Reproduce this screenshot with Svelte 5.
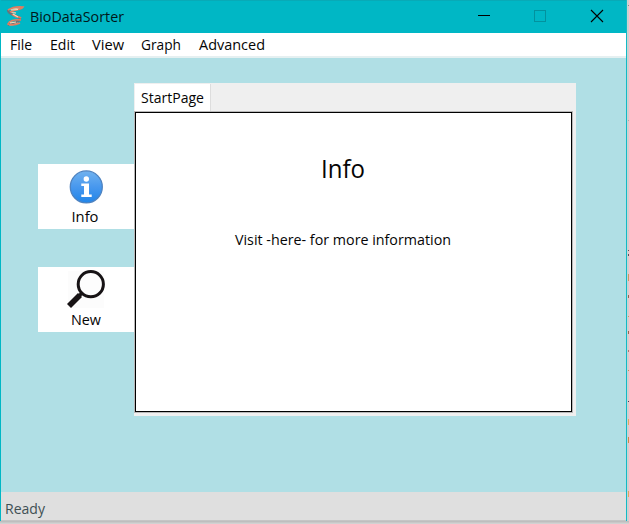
<script>
  const menus = [
    { label: 'File', width: 22, gap: 18 },
    { label: 'Edit', width: 25, gap: 17 },
    { label: 'View', width: 32, gap: 17 },
    { label: 'Graph', width: 40, gap: 18 },
    { label: 'Advanced', width: 66, gap: 0 }
  ];
  const specks = [
    { top: 5, color: '#8b8b8b', height: 1 },
    { top: 120, color: '#aaa', height: 1 },
    { top: 250, color: '#55515c', height: 1 },
    { top: 254, color: '#55515c', height: 2 },
    { top: 274, color: '#c69b62', height: 7 },
    { top: 295, color: '#8d6650', height: 3 },
    { top: 316, color: '#c09b68', height: 1 },
    { top: 331, color: '#94694f', height: 3 },
    { top: 350, color: '#a57c73', height: 2 },
    { top: 370, color: '#b8935c', height: 1 },
    { top: 401, color: '#453d58', height: 1 },
    { top: 419, color: '#d6ad61', height: 6 },
    { top: 437, color: '#c98c45', height: 6 },
    { top: 491, color: '#d6a961', height: 6 }
  ];
</script>

<div class="screen">
  <main class="window">
    <header>
      <svg class="logo" width="18" height="22" viewBox="0 0 18 22" fill="none">
        <path d="M4 4L14 3M4 7L10 8M8 11L15 13M3 17L12 18M3 20L10 19" stroke="#d3c7ae" stroke-width="1.7" />
        <path d="M2 5C2 11 14 10 14 14C14 17 7 17 2 20" stroke="#68747a" stroke-width="2.4" />
        <path d="M2 5Q8 1 17 2C15 5 9 4 4 7M6 9C8 12 12 11 15 13M15 15C8 14 3 16 2 19Q7 21 14 18" stroke="#e17c60" stroke-width="1.7" />
        <path d="M5 5L12 4.5M7 9L12 12M4 18L10 17" stroke="#f2dfbd" stroke-width="1.2" />
      </svg>
      <svg class="title" width="96" height="24"><text x="0" y="17" textLength="94" lengthAdjust="spacingAndGlyphs">BioDataSorter</text></svg>
      <svg class="controls" width="140" height="24" viewBox="0 0 140 24" fill="none" shape-rendering="crispEdges">
        <path d="M1 11.5H13" stroke="#000" />
        <rect x="57.5" y="6.5" width="11" height="11" stroke="#02929e" />
        <path d="M114 6L126 18M126 6L114 18" stroke="#000" stroke-width="1.1" shape-rendering="auto" />
      </svg>
    </header>
    <nav>
      {#each menus as item}
        <svg width={item.width} height="24" style:margin-right="{item.gap}px"><text x="0" y="17" textLength={item.width} lengthAdjust="spacingAndGlyphs">{item.label}</text></svg>
      {/each}
    </nav>
    <section class="client">
      <aside>
        <button>
          <svg width="96" height="65" viewBox="0 0 96 65">
            <defs><linearGradient id="blue" x2="0" y2="1"><stop stop-color="#70b2ef" /><stop offset=".5" stop-color="#4898ee" /><stop offset="1" stop-color="#2185e9" /></linearGradient></defs>
            <circle cx="48.3" cy="22.9" r="16" fill="url(#blue)" stroke="#4f83c0" stroke-width="1.3" />
            <circle cx="48.3" cy="15" r="2.7" fill="#fff" />
            <path d="M43.3 19.5H51V30.5H53.7V33H43.3V30.5H46V22H43.3Z" fill="#fff" />
            <text x="33.5" y="58" textLength="27" lengthAdjust="spacingAndGlyphs">Info</text>
          </svg>
        </button>
        <button>
          <svg width="96" height="65" viewBox="0 0 96 65">
            <rect x="30" y="4" width="36" height="37" fill="#fcfcfc" />
            <circle cx="52.8" cy="17.2" r="12.6" fill="#fdfdfd" stroke="#171315" stroke-width="3" />
            <path d="M44 26L40.5 29.5" stroke="#171315" stroke-width="3.4" />
            <path d="M42 28L31 39" stroke="#171315" stroke-width="5.6" />
            <text x="33" y="58" textLength="30" lengthAdjust="spacingAndGlyphs">New</text>
          </svg>
        </button>
      </aside>
      <section class="notebook">
        <div class="tab"><svg width="64" height="26"><text x="0" y="19" textLength="63" lengthAdjust="spacingAndGlyphs">StartPage</text></svg></div>
        <article>
          <svg class="heading" width="48" height="38"><text x="0" y="26" textLength="44" lengthAdjust="spacingAndGlyphs">Info</text></svg>
          <svg class="copy" width="220" height="24"><text x="0" y="17" textLength="216" lengthAdjust="spacingAndGlyphs">Visit -here- for more information</text></svg>
        </article>
      </section>
    </section>
    <footer><svg width="42" height="28"><text x="0" y="22" textLength="40" lengthAdjust="spacingAndGlyphs">Ready</text></svg></footer>
  </main>
  {#each specks as speck}
    <i style:top="{speck.top}px" style:height="{speck.height}px" style:background={speck.color}></i>
  {/each}
</div>

<style>
  :global(body) { margin: 0; overflow: hidden; }
  * { box-sizing: border-box; }
  svg { display: block; flex: none; overflow: visible; }
  text { font: 15px "Open Sans", "Noto Sans", sans-serif; fill: #050505; }
  .screen { width: 629px; height: 524px; position: relative; overflow: hidden; background: linear-gradient(to bottom, #d0d0d0 0 521px, #b9b9b9 521px, #d7d7d7 524px); }
  .window { width: 627px; height: 521px; border-left: 1px solid #00b7c5; border-right: 1px solid #12bac6; }
  header { height: 33px; background: #00b7c5; border-top: 1px solid #08aab7; display: flex; padding: 3px 0 0 5px; }
  .logo { margin-top: 1px; }
  .title { margin: 1px 0 0 6px; }
  .title text { fill: #001719; }
  .controls { margin-left: 351px; }
  nav { height: 25px; background: #fff; border-bottom: 2px solid #e5f0f1; display: flex; padding-left: 9px; }
  .client { height: 434px; display: flex; background: #b0dfe5; padding: 25px 0 0 37px; }
  aside { width: 96px; padding-top: 81px; }
  button { display: block; width: 96px; height: 65px; padding: 0; border: 0; background: #fff; margin-bottom: 38px; }
  .notebook { width: 442px; height: 333px; background: #efefef; padding-left: 1px; }
  .tab { width: 76px; height: 28px; margin-top: 1px; border-right: 1px solid #ddd; background: #fff; padding-left: 6px; }
  article { width: 437px; height: 300px; border: 1px solid #000; box-shadow: 0 0 0 1px #b8b8b8; background: #fff; padding: 39px 0 0 99px; }
  .heading { margin-left: 86px; }
  .heading text { font-size: 26px; }
  .copy { margin-top: 38px; }
  footer { height: 29px; background: #dfdfdf; border-bottom: 1px solid #c5c5c5; padding-left: 4px; }
  footer text { fill: #405055; }
  i { position: absolute; right: 0; width: 1px; }
</style>
